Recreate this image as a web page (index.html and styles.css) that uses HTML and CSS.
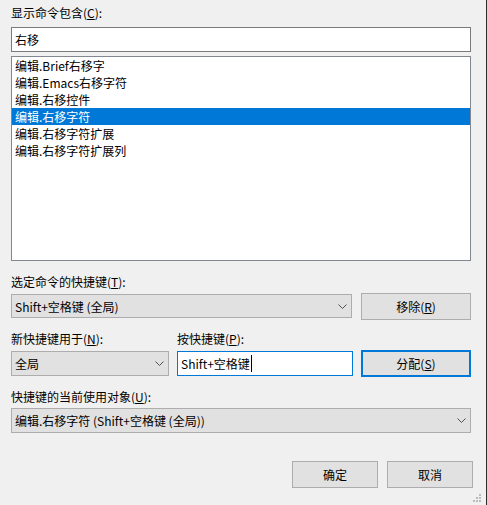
FILE: index.html
```html
<!DOCTYPE html>
<html lang="zh-CN">
<head>
<meta charset="utf-8">
<title>键盘</title>
<link rel="stylesheet" href="styles.css">
</head>
<body>
<div class="dlg">
  <div class="lbl">显示命令包含(<u>C</u>):</div>
  <div class="textbox search">右移</div>
  <div class="listbox">
    <div class="item">编辑.Brief右移字</div>
    <div class="item">编辑.Emacs右移字符</div>
    <div class="item">编辑.右移控件</div>
    <div class="item selected">编辑.右移字符</div>
    <div class="item">编辑.右移字符扩展</div>
    <div class="item">编辑.右移字符扩展列</div>
  </div>

  <div class="lbl l2">选定命令的快捷键(<u>T</u>):</div>
  <div class="row r1">
    <div class="combo c-shortcut"><span>Shift+空格键 (全局)</span><svg class="chev" width="9" height="5" viewBox="0 0 9 5"><polyline points="0.5,0.5 4.5,4.5 8.5,0.5" fill="none" stroke="#505050" stroke-width="1"/></svg></div>
    <div class="btn">移除(<u>R</u>)</div>
  </div>

  <div class="row labels">
    <div class="lbl l-scope">新快捷键用于(<u>N</u>):</div>
    <div class="lbl">按快捷键(<u>P</u>):</div>
  </div>
  <div class="row r2">
    <div class="combo c-scope"><span>全局</span><svg class="chev" width="9" height="5" viewBox="0 0 9 5"><polyline points="0.5,0.5 4.5,4.5 8.5,0.5" fill="none" stroke="#505050" stroke-width="1"/></svg></div>
    <div class="textbox keys"><span>Shift+空格键</span><span class="caret"></span></div>
    <div class="btn default">分配(<u>S</u>)</div>
  </div>

  <div class="lbl l4">快捷键的当前使用对象(<u>U</u>):</div>
  <div class="combo c-wide"><span>编辑.右移字符 (Shift+空格键 (全局))</span><svg class="chev" width="9" height="5" viewBox="0 0 9 5"><polyline points="0.5,0.5 4.5,4.5 8.5,0.5" fill="none" stroke="#505050" stroke-width="1"/></svg></div>

  <div class="footer">
    <div class="btn small">确定</div>
    <div class="btn small">取消</div>
  </div>

  <svg class="grip" width="9" height="9" viewBox="0 0 9 9">
    <rect x="6" y="0" width="2" height="2" fill="#bcbcbc"/>
    <rect x="3" y="3" width="2" height="2" fill="#bcbcbc"/>
    <rect x="6" y="3" width="2" height="2" fill="#bcbcbc"/>
    <rect x="0" y="6" width="2" height="2" fill="#bcbcbc"/>
    <rect x="3" y="6" width="2" height="2" fill="#bcbcbc"/>
    <rect x="6" y="6" width="2" height="2" fill="#bcbcbc"/>
  </svg>
</div>
</body>
</html>
```

FILE: styles.css
```css
* { box-sizing: border-box; }
html, body {
  margin: 0;
  padding: 0;
  background: #f0f0f0;
}
body {
  font-family: "Noto Sans CJK SC", "Noto Sans", sans-serif;
  font-size: 12px;
  color: #000;
}
.dlg {
  position: relative;
  width: 487px;
  height: 505px;
  padding: 5px 15px 0 11px;
  border-right: 1px solid #2e2e2e;
  display: flex;
  flex-direction: column;
}
u { text-decoration: underline; text-underline-offset: 1px; }
.lbl {
  height: 16px;
  line-height: 16px;
  white-space: nowrap;
}
.textbox {
  background: #fff;
  border: 1px solid #7a7a7a;
  padding-left: 3px;
  white-space: nowrap;
  display: flex;
  align-items: center;
}
.search {
  margin-top: 6px;
  height: 25px;
}
.listbox {
  margin-top: 4px;
  height: 205px;
  background: #fff;
  border: 1px solid #828790;
}
.item {
  height: 17px;
  line-height: 17px;
  padding-left: 3px;
  white-space: nowrap;
}
.item.selected {
  background: #0078d7;
  color: #fff;
}
.l2 { margin-top: 13px; }
.row {
  display: flex;
  align-items: flex-start;
}
.r1 { margin-top: 3px; gap: 9px; }
.combo {
  background: #e1e1e1;
  border: 1px solid #adadad;
  padding-left: 3px;
  padding-right: 4px;
  display: flex;
  align-items: center;
  justify-content: space-between;
  white-space: nowrap;
}
.chev { flex: none; }
.c-shortcut {
  margin-top: 1px;
  width: 341px;
  height: 24px;
}
.btn {
  background: #e1e1e1;
  border: 1px solid #adadad;
  width: 110px;
  height: 27px;
  display: flex;
  align-items: center;
  justify-content: center;
  white-space: nowrap;
}
.btn.default {
  border: 2px solid #0078d7;
}
.labels { margin-top: 11px; }
.l-scope { width: 166px; }
.r2 { margin-top: 3px; }
.c-scope {
  margin-top: 1px;
  width: 158px;
  height: 25px;
}
.keys {
  margin-top: 1px;
  margin-left: 8px;
  margin-right: 8px;
  width: 176px;
  height: 25px;
  border-color: #0078d7;
}
.caret {
  display: inline-block;
  width: 1px;
  height: 17px;
  background: #000;
  margin-left: 1px;
}
.l4 { margin-top: 12px; }
.c-wide {
  margin-top: 3px;
  height: 25px;
}
.footer {
  margin-top: 28px;
  margin-right: -2px;
  display: flex;
  justify-content: flex-end;
  gap: 9px;
}
.btn.small {
  width: 86px;
}
.grip {
  position: absolute;
  right: 4px;
  bottom: 2px;
}
```
